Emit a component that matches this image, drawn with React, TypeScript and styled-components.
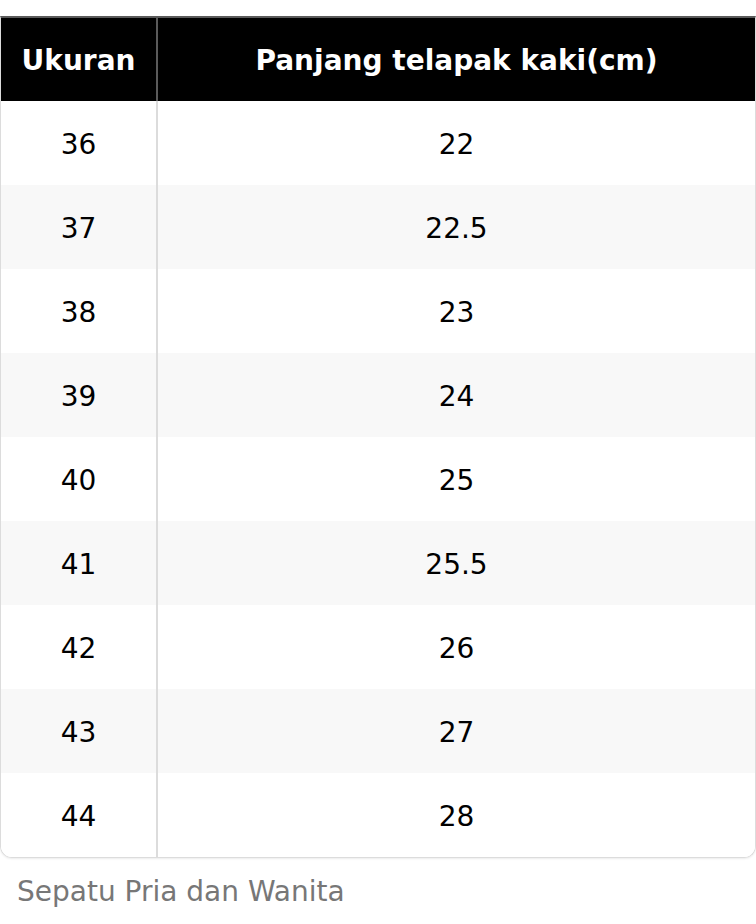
import React from 'react';
import styled, { createGlobalStyle } from 'styled-components';

const GlobalStyle = createGlobalStyle`
    html, body {
        margin: 0;
        padding: 0;
        background: #fff;
    }
    body {
        font-family: "DejaVu Sans", "Liberation Sans", sans-serif;
    }
`

const Page = styled.div`
    padding-top: 16px;
    width: 756px;
`

const TableWrapper = styled.div`
    border: 1px solid #dcdcdc;
    border-top: 2px solid #5a5a5a;
    border-radius: 0 0 12px 12px;
    overflow: hidden;
    box-shadow: 0 1px 2px rgba(0, 0, 0, 0.08);
`

const Row = styled.div<{ $striped?: boolean; $head?: boolean }>`
    display: grid;
    grid-template-columns: 157px 1fr;
    height: ${p => (p.$head ? '83px' : '84px')};
    background-color: ${p => (p.$head ? '#000' : p.$striped ? '#f8f8f8' : '#fff')};
    color: ${p => (p.$head ? '#fff' : '#000')};
    font-weight: ${p => (p.$head ? 700 : 400)};
`

const Cell = styled.div<{ $first?: boolean; $head?: boolean }>`
    display: flex;
    align-items: center;
    justify-content: center;
    padding-top: 2px;
    font-size: 28px;
    border-right: ${p => (p.$first ? `2px solid ${p.$head ? '#5a5a5a' : '#dcdcdc'}` : 'none')};
`

const Caption = styled.div`
    padding: 17px 0 0 17px;
    font-size: 28px;
    color: #777;
`

const sizes: [string, string][] = [
    ['36', '22'],
    ['37', '22.5'],
    ['38', '23'],
    ['39', '24'],
    ['40', '25'],
    ['41', '25.5'],
    ['42', '26'],
    ['43', '27'],
    ['44', '28'],
];

const App: React.FC = () => {
    return (
        <Page>
            <GlobalStyle />
            <TableWrapper>
                <Row $head>
                    <Cell $first $head>Ukuran</Cell>
                    <Cell $head>Panjang telapak kaki(cm)</Cell>
                </Row>
                {sizes.map(([size, length], i) => (
                    <Row key={size} $striped={i % 2 === 1}>
                        <Cell $first>{size}</Cell>
                        <Cell>{length}</Cell>
                    </Row>
                ))}
            </TableWrapper>
            <Caption>Sepatu Pria dan Wanita</Caption>
        </Page>
    );
}

export default App;
